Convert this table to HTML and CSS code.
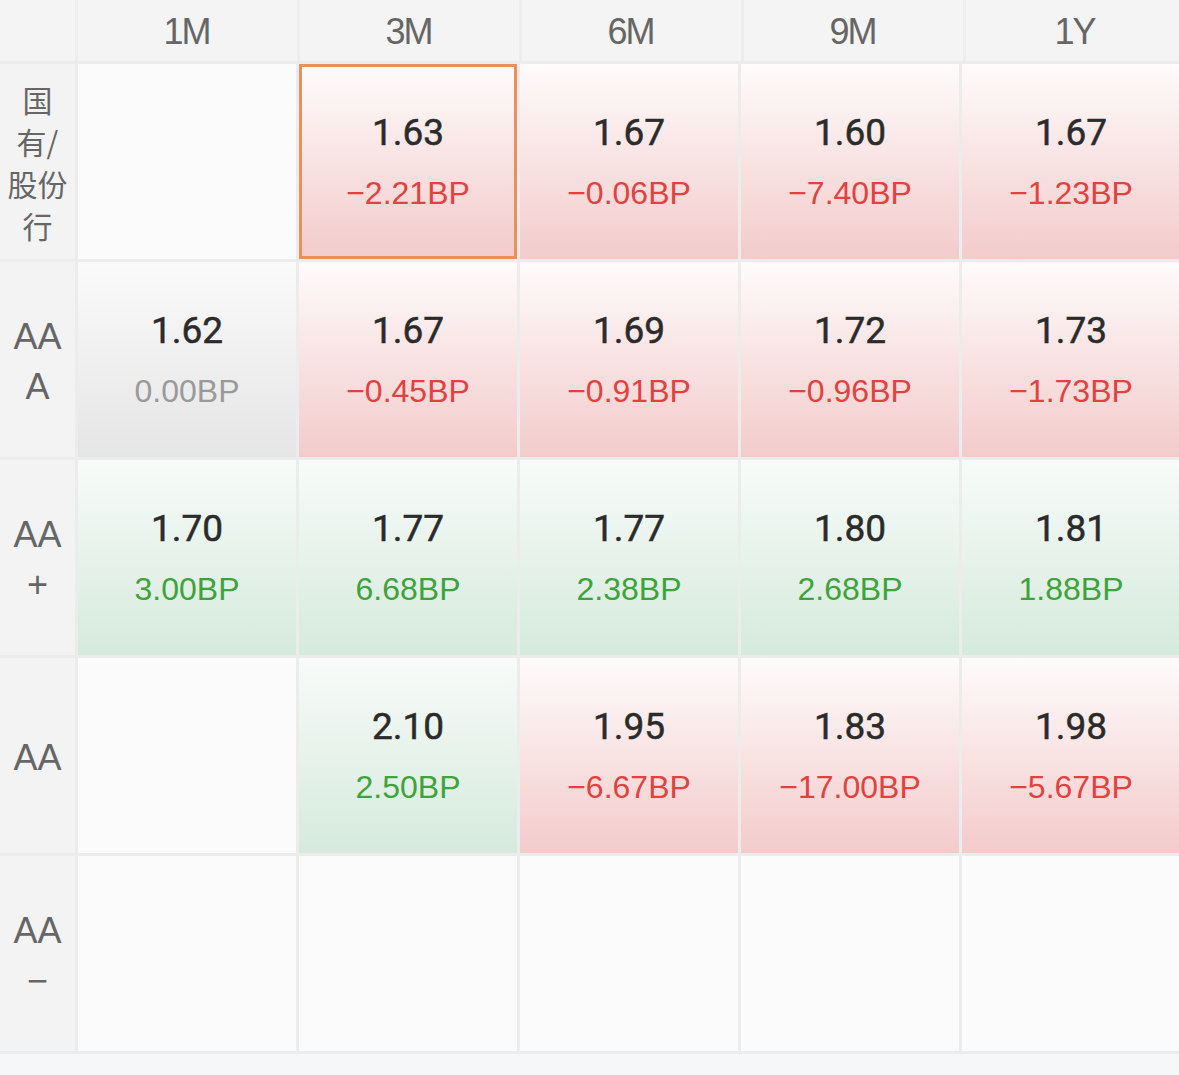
FILE: index.html
```html
<!DOCTYPE html>
<html lang="zh">
<head>
<meta charset="utf-8">
<link rel="stylesheet" href="styles.css">
</head>
<body>
<div class="page">
  <div class="head">
    <div class="hcell corner"></div>
    <div class="hcell">1M</div>
    <div class="hcell">3M</div>
    <div class="hcell">6M</div>
    <div class="hcell">9M</div>
    <div class="hcell">1Y</div>
  </div>
  <div class="grid">
    <div class="label cjk"><span>国</span><span>有/</span><span>股份</span><span>行</span></div>
    <div class="cell empty"></div>
    <div class="cell down selected"><div class="val">1.63</div><div class="bp">−2.21BP</div></div>
    <div class="cell down"><div class="val">1.67</div><div class="bp">−0.06BP</div></div>
    <div class="cell down"><div class="val">1.60</div><div class="bp">−7.40BP</div></div>
    <div class="cell down"><div class="val">1.67</div><div class="bp">−1.23BP</div></div>

    <div class="label"><span>AA</span><span>A</span></div>
    <div class="cell flat"><div class="val">1.62</div><div class="bp">0.00BP</div></div>
    <div class="cell down"><div class="val">1.67</div><div class="bp">−0.45BP</div></div>
    <div class="cell down"><div class="val">1.69</div><div class="bp">−0.91BP</div></div>
    <div class="cell down"><div class="val">1.72</div><div class="bp">−0.96BP</div></div>
    <div class="cell down"><div class="val">1.73</div><div class="bp">−1.73BP</div></div>

    <div class="label"><span>AA</span><span>+</span></div>
    <div class="cell up"><div class="val">1.70</div><div class="bp">3.00BP</div></div>
    <div class="cell up"><div class="val">1.77</div><div class="bp">6.68BP</div></div>
    <div class="cell up"><div class="val">1.77</div><div class="bp">2.38BP</div></div>
    <div class="cell up"><div class="val">1.80</div><div class="bp">2.68BP</div></div>
    <div class="cell up"><div class="val">1.81</div><div class="bp">1.88BP</div></div>

    <div class="label"><span>AA</span></div>
    <div class="cell empty"></div>
    <div class="cell up"><div class="val">2.10</div><div class="bp">2.50BP</div></div>
    <div class="cell down"><div class="val">1.95</div><div class="bp">−6.67BP</div></div>
    <div class="cell down"><div class="val">1.83</div><div class="bp">−17.00BP</div></div>
    <div class="cell down"><div class="val">1.98</div><div class="bp">−5.67BP</div></div>

    <div class="label"><span>AA</span><span>−</span></div>
    <div class="cell empty"></div>
    <div class="cell empty"></div>
    <div class="cell empty"></div>
    <div class="cell empty"></div>
    <div class="cell empty"></div>
  </div>
</div>
</body>
</html>
```
FILE: styles.css
```css
html, body {
  margin: 0;
  padding: 0;
  background: #f6f7f8;
}
body {
  font-family: "Liberation Sans", "Noto Sans CJK SC", sans-serif;
  overflow: hidden;
}
.page {
  width: 1179px;
  overflow: hidden;
}
.head {
  display: grid;
  grid-template-columns: 75px repeat(5, 219px);
  column-gap: 3px;
  height: 61px;
  background: #ededed;
  border-bottom: 3px solid #ececec;
  width: 1200px;
}
.hcell {
  background: #f4f4f4;
  color: #666;
  font-size: 36px;
  letter-spacing: -2px;
  display: flex;
  align-items: center;
  justify-content: center;
  padding-right: 2px;
  padding-top: 2px;
}
.hcell.corner {
  padding: 0;
}
.grid {
  display: grid;
  grid-template-columns: 75px repeat(5, 218px);
  grid-auto-rows: 195px;
  gap: 3px;
  background: #ececec;
  width: 1200px;
  padding-bottom: 3px;
}
.label {
  background: #f3f3f3;
  color: #666;
  font-size: 36px;
  line-height: 50px;
  display: flex;
  flex-direction: column;
  align-items: center;
  justify-content: center;
  padding-top: 5px;
}
.label.cjk {
  font-family: "Noto Sans CJK SC", sans-serif;
  font-size: 30px;
  line-height: 42px;
  padding-top: 0;
}
.label span {
  display: block;
}
.cell {
  display: flex;
  flex-direction: column;
  align-items: center;
  justify-content: center;
  box-sizing: border-box;
  padding-top: 2px;
}
.empty {
  background: #fbfbfb;
}
.down {
  background: linear-gradient(to bottom, #fefbfb 0%, #f3cbcb 100%);
}
.up {
  background: linear-gradient(to bottom, #f8fbf9 0%, #d5eadc 100%);
}
.flat {
  background: linear-gradient(to bottom, #fafafa 0%, #e5e5e5 100%);
}
.selected {
  border: 3px solid #e9915c;
}
.val {
  font-family: "Roboto", "Liberation Sans", sans-serif;
  font-weight: 400;
  -webkit-text-stroke: 0.5px #2b2b2b;
  font-size: 37px;
  line-height: 60px;
  color: #2b2b2b;
}
.bp {
  font-size: 32px;
  line-height: 60px;
  color: #e2423f;
}
.up .bp {
  color: #3ea33a;
}
.flat .bp {
  color: #9a9a9a;
}
```
